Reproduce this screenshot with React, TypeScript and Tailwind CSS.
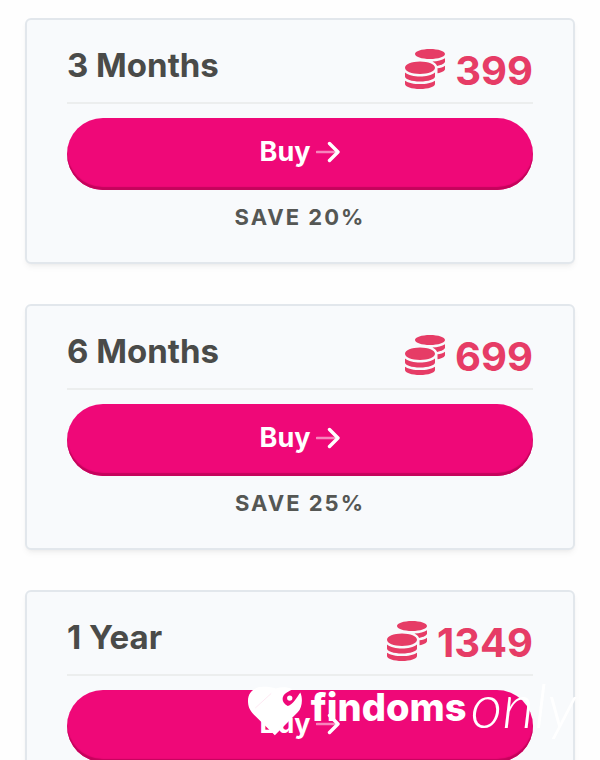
import { FaCoins } from 'react-icons/fa';

type Plan = {
  id: string;
  name: string;
  price: number;
  note: string;
};

const plans: Plan[] = [
  { id: '3m', name: '3 Months', price: 399, note: 'Save 20%' },
  { id: '6m', name: '6 Months', price: 699, note: 'Save 25%' },
  { id: '1y', name: '1 Year', price: 1349, note: '' },
];

function ArrowIcon() {
  return (
    <svg viewBox="0 0 24 24" className="w-6 h-6" fill="none" stroke="currentColor" strokeLinecap="round" aria-hidden="true">
      <path d="M1 12H20" strokeWidth="2.6" opacity="0.5" />
      <path d="M13.5 3.5L22 12L13.5 20.5" strokeWidth="3.4" strokeLinejoin="round" />
    </svg>
  );
}

function PlanCard({ plan }: { plan: Plan }) {
  return (
    <section className="rounded-md border-2 border-[#e2e7ec] bg-[#f8fafc] px-10 pt-6 pb-7 shadow-md shadow-black/5">
      <div className="flex h-[60px] items-center justify-between border-b-2 border-[#eceeee] pb-3">
        <h2 className="pb-1 text-[33px] leading-10 font-bold text-[#4a4b49]">{plan.name}</h2>
        <div className="flex items-center gap-[10px] pt-1 text-[#e63c66]">
          <FaCoins className="size-10" aria-hidden="true" />
          <span className="pt-1 text-[40px] leading-10 font-bold">{plan.price}</span>
        </div>
      </div>
      <button
        type="button"
        className="mt-[14px] flex h-[72px] w-full items-center justify-center gap-[6px] rounded-full bg-[#ef0878] pb-1 text-[27px] font-bold text-white shadow-[inset_0_-3px_1px_#c4045c]"
      >
        Buy
        <ArrowIcon />
      </button>
      <p className="mt-3 h-8 text-center text-[22px] leading-[30px] font-bold tracking-[2px] text-[#555754] uppercase">
        {plan.note}
      </p>
    </section>
  );
}

function BrandMark() {
  return (
    <div className="absolute right-6 bottom-6 flex items-start text-white">
      <svg viewBox="12 18 166 150" className="h-[50px] w-[55px]" aria-hidden="true">
        <path
          d="M93 166L30 104C16 90 12 78 12 62C12 34 34 20 58 20C74 20 86 22 96 25C112 20 130 20 146 27L128 38C112 48 112 68 132 78C148 72 158 54 170 37C178 56 176 82 162 97L93 166Z"
          fill="currentColor"
        />
        <circle cx="138" cy="54" r="13" fill="#ef0878" />
        <circle cx="138" cy="54" r="8" fill="currentColor" />
        <path d="M34 84L82 40" stroke="#fbd0e4" strokeWidth="1.5" />
      </svg>
      <span className="ml-2 text-[38px] leading-[42px] font-extrabold">findoms</span>
      <span className="ml-1 font-[Lato] text-[62px] leading-9 font-light italic">only</span>
    </div>
  );
}

export default function App() {
  return (
    <main className="relative h-screen overflow-hidden bg-[#fefefe] font-[Inter,sans-serif]">
      <div className="flex flex-col gap-10 px-[25px] pt-[18px]">
        {plans.map((plan) => (
          <PlanCard key={plan.id} plan={plan} />
        ))}
      </div>
      <BrandMark />
    </main>
  );
}
